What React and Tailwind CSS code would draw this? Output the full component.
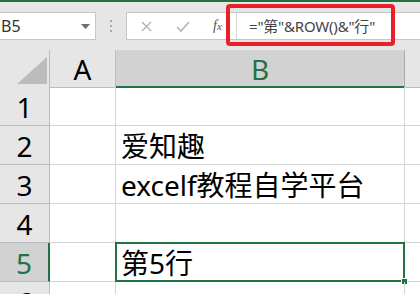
import React from 'react';

const FONT = "font-['Noto_Sans','Noto_Sans_CJK_SC',sans-serif]";

// rows of the sheet: number + text in column B
const rows = [
  { n: 1, b: '' },
  { n: 2, b: '爱知趣' },
  { n: 3, b: 'excelf教程自学平台' },
  { n: 4, b: '' },
  { n: 5, b: '第5行', active: true },
  { n: 6, b: '' },
];

function CornerTriangle() {
  return (
    <svg width="50" height="37" viewBox="0 0 50 37" className="block">
      <polygon points="17,34 47,34 47,7" fill="#bcbcbc" />
    </svg>
  );
}

function Toolbar() {
  return (
    <div className="h-[48px] bg-[#e6e6e6] flex items-start pt-[10px]">
      {/* Name box */}
      <div className="w-[96px] h-[28px] bg-white border border-l-0 border-[#c6c6c6] flex items-center justify-between pl-[1px] pr-[5px]">
        <span className="text-[16px] text-[#333] leading-none font-['Noto_Sans',sans-serif]">B5</span>
        <svg width="9" height="5" viewBox="0 0 9 5">
          <polygon points="0,0 9,0 4.5,5" fill="#6d6d6d" />
        </svg>
      </div>

      {/* Grip dots */}
      <div className="w-[30px] h-[28px] flex flex-col items-center justify-center gap-[3px]">
        <span className="w-[2px] h-[2px] bg-[#a8a8a8]" />
        <span className="w-[2px] h-[2px] bg-[#a8a8a8]" />
        <span className="w-[2px] h-[2px] bg-[#a8a8a8]" />
      </div>

      {/* Formula bar */}
      <div className="flex-1 h-[28px] flex bg-white border-y border-l border-[#c6c6c6]">
        <div className="w-[110px] flex items-center border-r border-[#d4d4d4]">
          <svg width="11" height="11" viewBox="0 0 11 11" className="ml-[14px]">
            <path d="M1 1 L10 10 M10 1 L1 10" stroke="#b3b3b3" strokeWidth="1.4" fill="none" />
          </svg>
          <svg width="14" height="11" viewBox="0 0 14 11" className="ml-[24px]">
            <path d="M1 6 L5 10 L13 1" stroke="#b3b3b3" strokeWidth="1.6" fill="none" />
          </svg>
          <span className="ml-[23px] text-[14px] italic text-[#555] font-['Liberation_Serif',serif] leading-none">
            f<span className="text-[11px]">x</span>
          </span>
        </div>
        <div className="flex-1 flex items-center pl-[12px]">
          <span className="text-[15px] text-[#444] leading-none font-['Noto_Sans','Noto_Sans_CJK_SC',sans-serif] whitespace-nowrap tracking-[-0.2px]">
            ="第"&ROW()&"行"
          </span>
        </div>
      </div>
    </div>
  );
}

function HeaderRow() {
  return (
    <div className="grid grid-cols-[50px_66px_289px_1fr] h-[37px]">
      <div className="bg-[#e6e6e6] border-r border-b border-[#bdbdbd]">
        <CornerTriangle />
      </div>
      <div className="bg-[#e6e6e6] border-r border-b border-[#bdbdbd] flex items-center justify-center text-[28px] text-black leading-none">
        A
      </div>
      <div className="bg-[#d2d2d2] border-r border-[#ababab] border-b-2 border-b-[#217346] flex items-center justify-center text-[28px] text-[#217346] leading-none pt-[1px]">
        B
      </div>
      <div className="bg-[#e6e6e6] border-b border-[#bdbdbd]" />
    </div>
  );
}

function SheetRow({ row }) {
  return (
    <div className="grid grid-cols-[50px_66px_289px_1fr] h-[39px]">
      {row.active ? (
        <div className="bg-[#d2d2d2] border-r-2 border-r-[#217346] border-b border-b-[#bdbdbd] flex items-end justify-center pb-[4px] text-[28px] leading-none text-[#217346]">
          {row.n}
        </div>
      ) : (
        <div className="bg-[#e6e6e6] border-r border-b border-[#bdbdbd] flex items-end justify-center pb-[4px] text-[28px] leading-none text-black">
          {row.n}
        </div>
      )}
      <div className="border-r border-b border-[#d4d4d4]" />
      <div className="relative border-r border-b border-[#d4d4d4] flex items-end pl-[5px] pb-[4px] text-[28px] leading-none text-black whitespace-nowrap">
        {row.b}
        {row.active && (
          <>
            <div className="absolute top-[-1px] left-[-1px] right-[-1px] bottom-[-1px] border-2 border-[#217346]" />
            <div className="absolute right-[-4px] bottom-[-4px] w-[7px] h-[7px] bg-[#217346] border border-white" />
          </>
        )}
      </div>
      <div className="border-b border-[#d4d4d4]" />
    </div>
  );
}

export default function App() {
  return (
    <div className={`relative w-[420px] h-[294px] overflow-hidden bg-white ${FONT}`}>
      <div className="h-[2px] bg-[#217346]" />
      <Toolbar />
      <HeaderRow />
      {rows.map((row) => (
        <SheetRow key={row.n} row={row} />
      ))}

      {/* red highlight around the formula */}
      <div className="absolute left-[226px] top-[4px] w-[169px] h-[42px] border-4 border-[#e8202a] rounded-[4px]" />
    </div>
  );
}
